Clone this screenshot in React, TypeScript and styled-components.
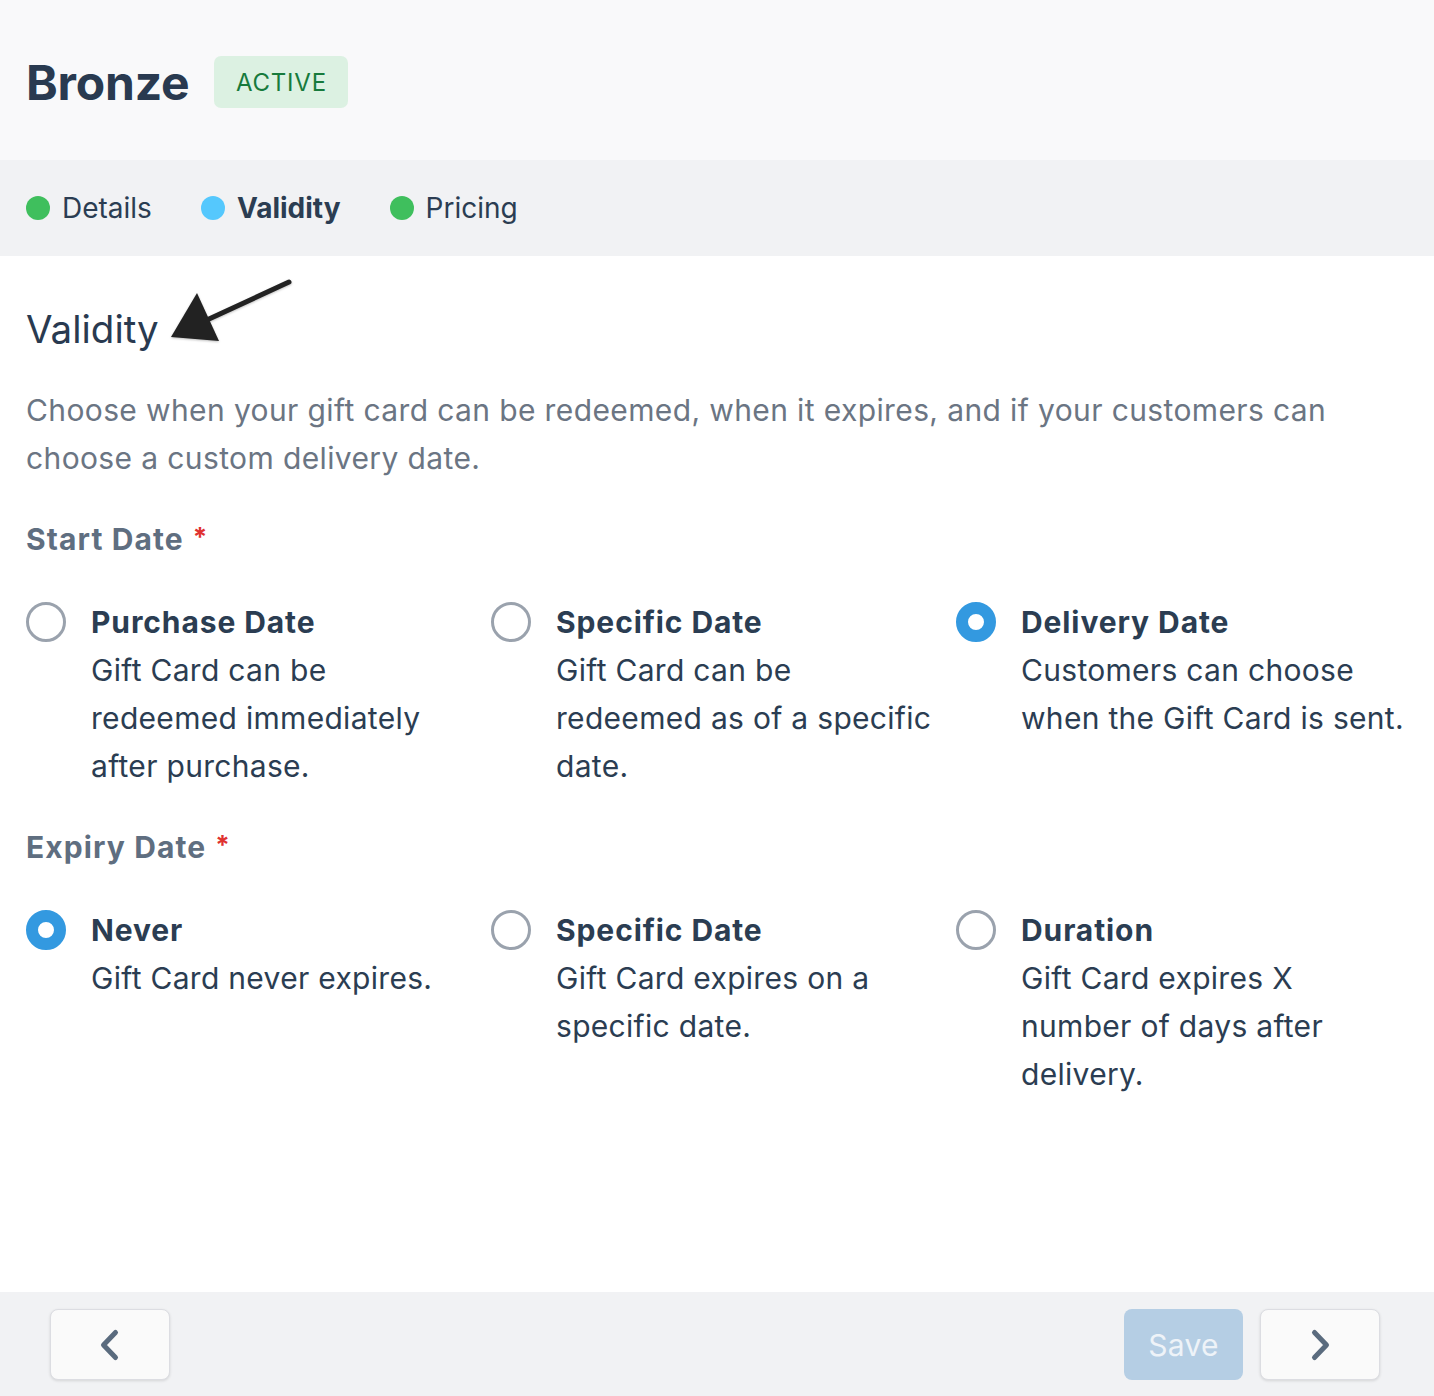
import React, { useState } from "react";
import styled, { createGlobalStyle } from "styled-components";

const GlobalStyle = createGlobalStyle`
  html, body {
    margin: 0;
    padding: 0;
    background: #ffffff;
  }
  body {
    font-family: Inter, "Noto Sans", "Liberation Sans", sans-serif;
    color: #2b3d52;
  }
  * {
    box-sizing: border-box;
  }
`;

// Page frame: header, steps, body and footer stacked in a column
const Page = styled.div`
  display: flex;
  flex-direction: column;
  min-height: 100vh;
`;

const Header = styled.header`
  display: flex;
  align-items: center;
  gap: 25px;
  height: 160px;
  padding: 4px 26px 0;
  background: #f9f9fa;
`;

const Title = styled.h1`
  margin: 0;
  font-size: 48px;
  font-weight: 700;
  color: #293a50;
  letter-spacing: -0.2px;
`;

const Badge = styled.span`
  display: inline-flex;
  align-items: center;
  justify-content: center;
  width: 134px;
  height: 52px;
  border-radius: 7px;
  background: #dcf1e2;
  color: #177a3c;
  font-size: 24px;
  letter-spacing: 0.8px;
`;

// Steps bar
const Steps = styled.nav`
  display: flex;
  align-items: center;
  gap: 49px;
  height: 96px;
  padding: 0 26px;
  background: #f1f2f4;
`;

const Step = styled.div<{ $active?: boolean }>`
  display: flex;
  align-items: center;
  gap: 12px;
  font-size: 28px;
  font-weight: ${(p) => (p.$active ? 700 : 400)};
  color: #2b3d52;
`;

const Dot = styled.span<{ $color: string }>`
  width: 24px;
  height: 24px;
  border-radius: 50%;
  background: ${(p) => p.$color};
`;

// Main form body
const Body = styled.main`
  flex: 1;
  padding: 23px 13px 40px 26px;
`;

const HeadingRow = styled.div`
  display: flex;
  align-items: flex-end;
  gap: 10px;
`;

const Heading = styled.h2`
  margin: 0;
  font-size: 38.5px;
  line-height: 48px;
  font-weight: 400;
  color: #293a50;
`;

const Arrow = styled.svg`
  display: block;
  margin-bottom: 8px;
  filter: drop-shadow(0 1px 1px rgba(0, 0, 0, 0.25));
`;

const Intro = styled.p`
  margin: 33px 0 0;
  font-size: 30px;
  line-height: 48px;
  letter-spacing: 0.38px;
  color: #6b7583;
  max-width: 1340px;
`;

const Label = styled.div`
  margin-top: 31px;
  font-size: 30px;
  line-height: 48px;
  font-weight: 700;
  letter-spacing: 1.1px;
  color: #5f6e80;
`;

const Required = styled.span`
  color: #e0322f;
  margin-left: 9px;
  font-size: 26px;
  vertical-align: 4px;
`;

const Options = styled.div`
  display: grid;
  grid-template-columns: repeat(3, 1fr);
  margin-top: 35px;
`;

const Option = styled.label`
  display: flex;
  align-items: flex-start;
  gap: 25px;
  cursor: pointer;
`;

const Radio = styled.span<{ $checked?: boolean }>`
  flex: none;
  width: 40px;
  height: 40px;
  margin-top: 4px;
  border-radius: 50%;
  border: ${(p) => (p.$checked ? "12px solid #3399e0" : "3px solid #9aa2ad")};
  background: #ffffff;
`;

const OptionText = styled.div`
  font-size: 30px;
  line-height: 48px;
  letter-spacing: 0.3px;
  color: #2b3d52;
  padding-right: 14px;
`;

const OptionTitle = styled.div`
  font-weight: 700;
  letter-spacing: 0.9px;
`;

// Footer navigation
const Footer = styled.footer`
  display: flex;
  align-items: flex-start;
  justify-content: space-between;
  height: 104px;
  padding: 17px 54px 0 50px;
  background: #f1f2f4;
`;

const Actions = styled.div`
  display: flex;
  gap: 17px;
`;

const NavButton = styled.button`
  display: flex;
  align-items: center;
  justify-content: center;
  width: 120px;
  height: 71px;
  border-radius: 8px;
  border: 1px solid #dcdde2;
  background: #fafafa;
  box-shadow: 0 1px 3px rgba(0, 0, 0, 0.12);
  cursor: pointer;
`;

const SaveButton = styled.button`
  width: 119px;
  height: 71px;
  border: none;
  border-radius: 8px;
  background: #b5cee4;
  color: #eef3f8;
  font-family: inherit;
  font-size: 30px;
  letter-spacing: 0.3px;
`;

const Chevron = ({ dir }: { dir: "left" | "right" }) => (
  <svg width="24" height="34" viewBox="0 0 24 34">
    <path
      d={dir === "left" ? "M17.5 4.5 L5.5 17 L17.5 29.5" : "M6.5 4.5 L18.5 17 L6.5 29.5"}
      fill="none"
      stroke="#5a6b7e"
      strokeWidth="5"
      strokeLinecap="round"
      strokeLinejoin="round"
    />
  </svg>
);

type Choice = { id: string; title: string; text: string };

const startChoices: Choice[] = [
  { id: "purchase", title: "Purchase Date", text: "Gift Card can be redeemed immediately after purchase." },
  { id: "specific", title: "Specific Date", text: "Gift Card can be redeemed as of a specific date." },
  { id: "delivery", title: "Delivery Date", text: "Customers can choose when the Gift Card is sent." },
];

const expiryChoices: Choice[] = [
  { id: "never", title: "Never", text: "Gift Card never expires." },
  { id: "specific", title: "Specific Date", text: "Gift Card expires on a specific date." },
  { id: "duration", title: "Duration", text: "Gift Card expires X number of days after delivery." },
];

const ChoiceGroup = ({
  choices,
  value,
  onChange,
}: {
  choices: Choice[];
  value: string;
  onChange: (v: string) => void;
}) => (
  <Options>
    {choices.map((c) => (
      <Option key={c.id} onClick={() => onChange(c.id)}>
        <Radio $checked={value === c.id} />
        <OptionText>
          <OptionTitle>{c.title}</OptionTitle>
          {c.text}
        </OptionText>
      </Option>
    ))}
  </Options>
);

export default function App() {
  const [start, setStart] = useState("delivery");
  const [expiry, setExpiry] = useState("never");

  return (
    <Page>
      <GlobalStyle />
      <Header>
        <Title>Bronze</Title>
        <Badge>ACTIVE</Badge>
      </Header>

      <Steps>
        <Step>
          <Dot $color="#3fbf5d" />
          Details
        </Step>
        <Step $active>
          <Dot $color="#55c8fd" />
          Validity
        </Step>
        <Step>
          <Dot $color="#3fbf5d" />
          Pricing
        </Step>
      </Steps>

      <Body>
        <HeadingRow>
          <Heading>Validity</Heading>
          <Arrow width="124" height="66" viewBox="0 0 124 66">
            <line x1="120" y1="3" x2="40" y2="40" stroke="#222" strokeWidth="5" strokeLinecap="round" />
            <polygon points="2,58 28,14 50,62" fill="#222" />
          </Arrow>
        </HeadingRow>

        <Intro>
          Choose when your gift card can be redeemed, when it expires, and if your customers can choose a custom
          delivery date.
        </Intro>

        <Label>
          Start Date<Required>*</Required>
        </Label>
        <ChoiceGroup choices={startChoices} value={start} onChange={setStart} />

        <Label>
          Expiry Date<Required>*</Required>
        </Label>
        <ChoiceGroup choices={expiryChoices} value={expiry} onChange={setExpiry} />
      </Body>

      <Footer>
        <NavButton aria-label="Back">
          <Chevron dir="left" />
        </NavButton>
        <Actions>
          <SaveButton disabled>Save</SaveButton>
          <NavButton aria-label="Next">
            <Chevron dir="right" />
          </NavButton>
        </Actions>
      </Footer>
    </Page>
  );
}
